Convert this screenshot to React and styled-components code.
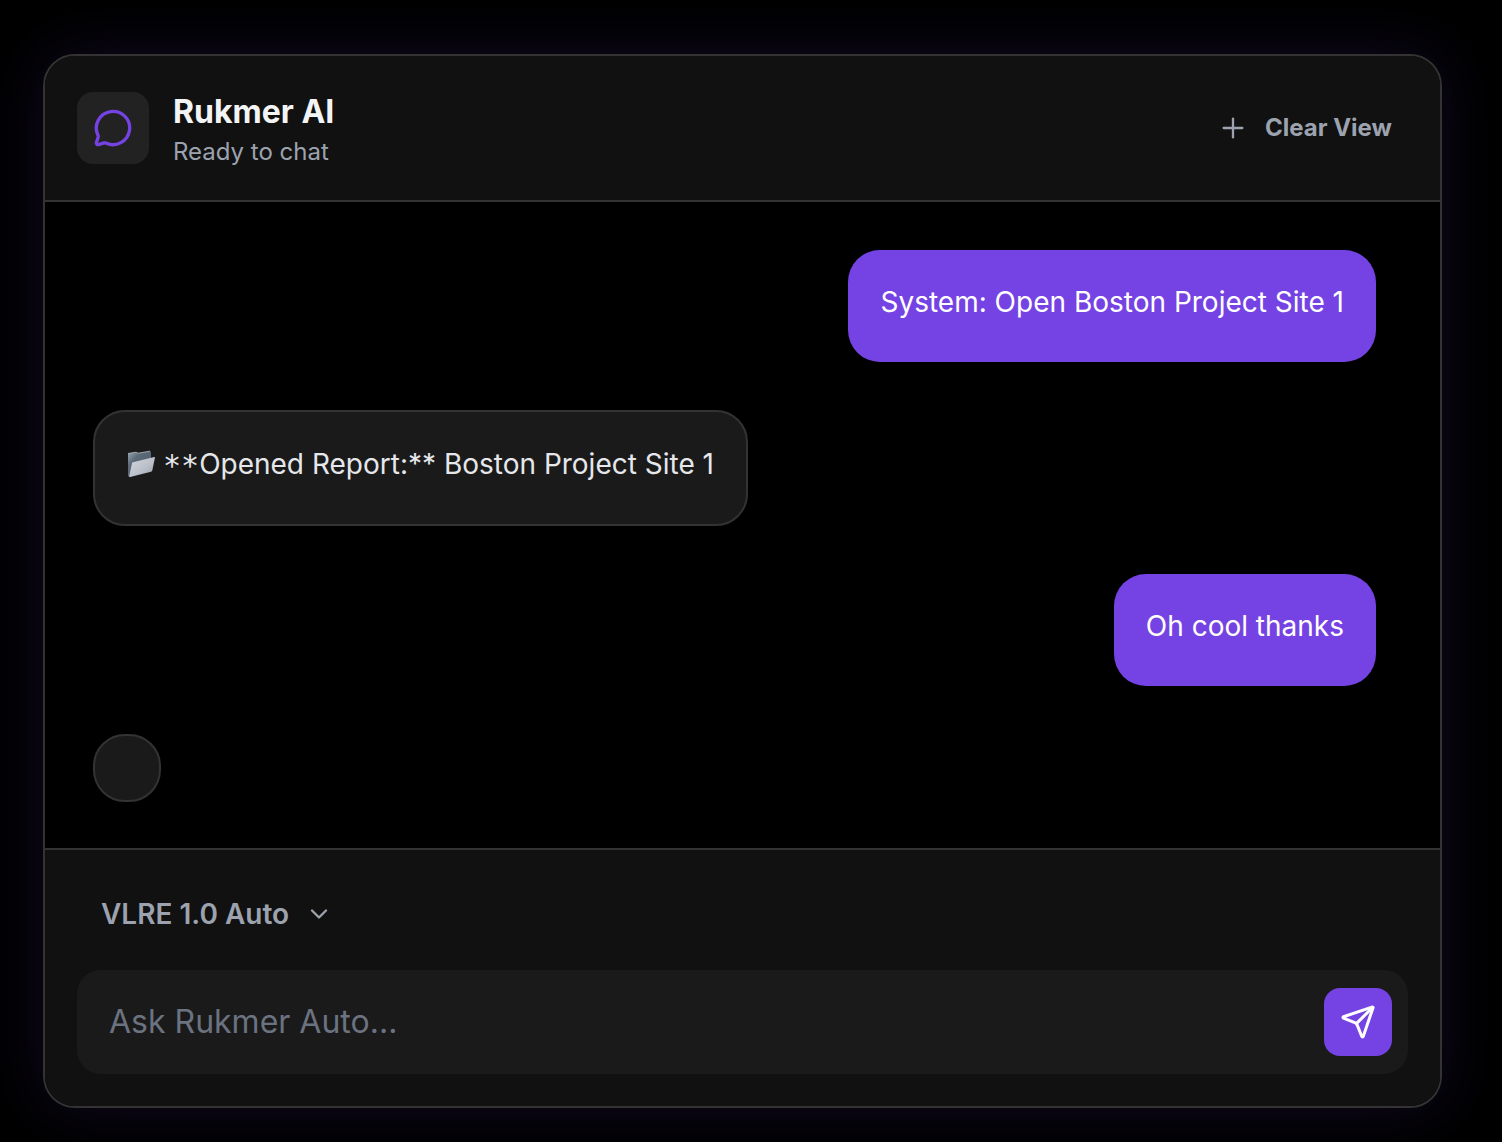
import React from 'react';
import styled, { createGlobalStyle } from 'styled-components';
import { ChevronDown, MessageCircle, Plus, Send } from 'lucide-react';

const GlobalStyle = createGlobalStyle`
  *, *::before, *::after {
    box-sizing: border-box;
  }
  body {
    margin: 0;
    background: #000;
    color: #f3f4f6;
    font-family: Inter, 'Liberation Sans', sans-serif;
  }
  button, input {
    font-family: inherit;
  }
`;

const Page = styled.div`
  display: flex;
  min-height: 100vh;
  padding: 54px 60px 34px 43px;
`;

const ChatWindow = styled.main`
  display: flex;
  flex: 1;
  flex-direction: column;
  min-width: 0;
  overflow: hidden;
  border: 2px solid #333;
  border-radius: 32px;
  background: #000;
  box-shadow: 0 0 60px rgba(117, 67, 227, 0.15);
`;

const Header = styled.header`
  display: flex;
  align-items: center;
  justify-content: space-between;
  padding: 32px;
  border-bottom: 2px solid #333;
  background: #111;
`;

const Brand = styled.div`
  display: flex;
  align-items: center;
  gap: 24px;
`;

const Logo = styled.div`
  display: flex;
  align-items: center;
  justify-content: center;
  width: 72px;
  height: 72px;
  border-radius: 16px;
  background: #222;
  color: #7543e3;
`;

const Title = styled.h1`
  margin: 0;
  font-size: 32px;
  font-weight: 700;
  line-height: 48px;
`;

const Status = styled.p`
  margin: 0;
  color: #9ca3af;
  font-size: 24px;
  line-height: 32px;
`;

const GhostButton = styled.button`
  display: flex;
  align-items: center;
  gap: 16px;
  padding: 16px;
  border: 0;
  background: none;
  color: #9ca3af;
  font-size: 24px;
  font-weight: 700;
  line-height: 32px;
  cursor: pointer;
`;

const Messages = styled.section`
  display: flex;
  flex: 1;
  flex-direction: column;
  gap: 48px;
  padding: 48px 64px 46px 48px;
`;

const Bubble = styled.div`
  align-self: ${({ $own }) => ($own ? 'flex-end' : 'flex-start')};
  padding: 32px;
  border: ${({ $own }) => ($own ? '0' : '2px solid #333')};
  border-radius: 32px;
  background: ${({ $own }) => ($own ? '#7543e3' : '#1a1a1a')};
  color: ${({ $own }) => ($own ? '#fff' : '#e5e7eb')};
  font-size: 28px;
  line-height: 40px;

  p {
    margin: 0 0 8px;
  }
`;

const Stars = styled.span`
  font-family: 'DejaVu Sans Mono', monospace;
  font-size: 30px;
  line-height: 1;
  vertical-align: middle;
`;

const FolderIcon = styled.svg`
  width: 36px;
  height: 32px;
  vertical-align: middle;
`;

const Footer = styled.footer`
  display: flex;
  flex-direction: column;
  align-items: flex-start;
  gap: 24px;
  padding: 32px;
  border-top: 2px solid #333;
  background: #111;
`;

const ModelButton = styled(GhostButton)`
  padding: 16px 24px;
  font-size: 28px;
  font-weight: 600;
`;

const Composer = styled.form`
  display: flex;
  align-items: center;
  width: 100%;
  padding: 18px 16px 18px 32px;
  border-radius: 24px;
  background: #1a1a1a;
`;

const MessageInput = styled.input`
  flex: 1;
  min-width: 0;
  padding: 0;
  border: 0;
  outline: 0;
  background: none;
  color: #f3f4f6;
  font-size: 32px;
  line-height: 48px;

  &::placeholder {
    color: #6b7280;
    opacity: 1;
  }
`;

const SendButton = styled.button`
  display: flex;
  align-items: center;
  justify-content: center;
  width: 68px;
  height: 68px;
  padding: 0;
  border: 0;
  border-radius: 16px;
  background: #7543e3;
  color: #fff;
  cursor: pointer;
`;

const Folder = () => (
  <FolderIcon viewBox="0 0 36 32" role="img" aria-label="Open folder">
    <defs>
      <linearGradient id="folderBack" x1="0" y1="0" x2="1" y2="1">
        <stop offset="0" stopColor="#9aa7b4" />
        <stop offset="0.3" stopColor="#5d6b79" />
        <stop offset="1" stopColor="#4d5a68" />
      </linearGradient>
      <linearGradient id="folderFront" x1="0" y1="0" x2="1" y2="1">
        <stop offset="0" stopColor="#d3d7dd" />
        <stop offset="0.6" stopColor="#b9bec8" />
        <stop offset="1" stopColor="#969daa" />
      </linearGradient>
    </defs>
    <path d="M1 3.500 9 2.200l2 1L23 1.200l1 .8v17L3 27l-2-1z" fill="url(#folderBack)" />
    <path d="M1 3.500 9 2.200l2 1L23 1.200" fill="none" stroke="#b4bfca" strokeWidth="0.8" />
    <path d="M6 12.200 27.200 7q1-.2.7.8L25.300 20.500q-.3 1-1.300 1.300L3 27q-1 .2-.8-.8L5 13.200q.2-.8 1-1z" fill="url(#folderFront)" />
  </FolderIcon>
);

const messages = [
  { id: 1, own: true, text: 'System: Open Boston Project Site 1' },
  { id: 2, own: false, folder: true, stars: '**', text: 'Opened Report:** Boston Project Site 1' },
  { id: 3, own: true, text: 'Oh cool thanks' },
  { id: 4, own: false, text: '' },
];

export default function App() {
  return (
    <>
      <GlobalStyle />
      <Page>
        <ChatWindow>
          <Header>
            <Brand>
              <Logo>
                <MessageCircle size={40} />
              </Logo>
              <div>
                <Title>Rukmer AI</Title>
                <Status>Ready to chat</Status>
              </div>
            </Brand>
            <GhostButton type="button">
              <Plus size={32} strokeWidth={1.75} />
              Clear View
            </GhostButton>
          </Header>
          <Messages>
            {messages.map(({ id, own, folder, stars, text }) => (
              <Bubble key={id} $own={own}>
                {text && (
                  <p>
                    {folder && <Folder />}
                    {stars && <Stars>{stars}</Stars>}
                    {text}
                  </p>
                )}
              </Bubble>
            ))}
          </Messages>
          <Footer>
            <ModelButton type="button" aria-haspopup="listbox">
              VLRE 1.0 Auto
              <ChevronDown size={28} />
            </ModelButton>
            <Composer onSubmit={(e) => e.preventDefault()}>
              <MessageInput type="text" aria-label="Message" placeholder="Ask Rukmer Auto..." />
              <SendButton type="submit" aria-label="Send">
                <Send size={36} />
              </SendButton>
            </Composer>
          </Footer>
        </ChatWindow>
      </Page>
    </>
  );
}
